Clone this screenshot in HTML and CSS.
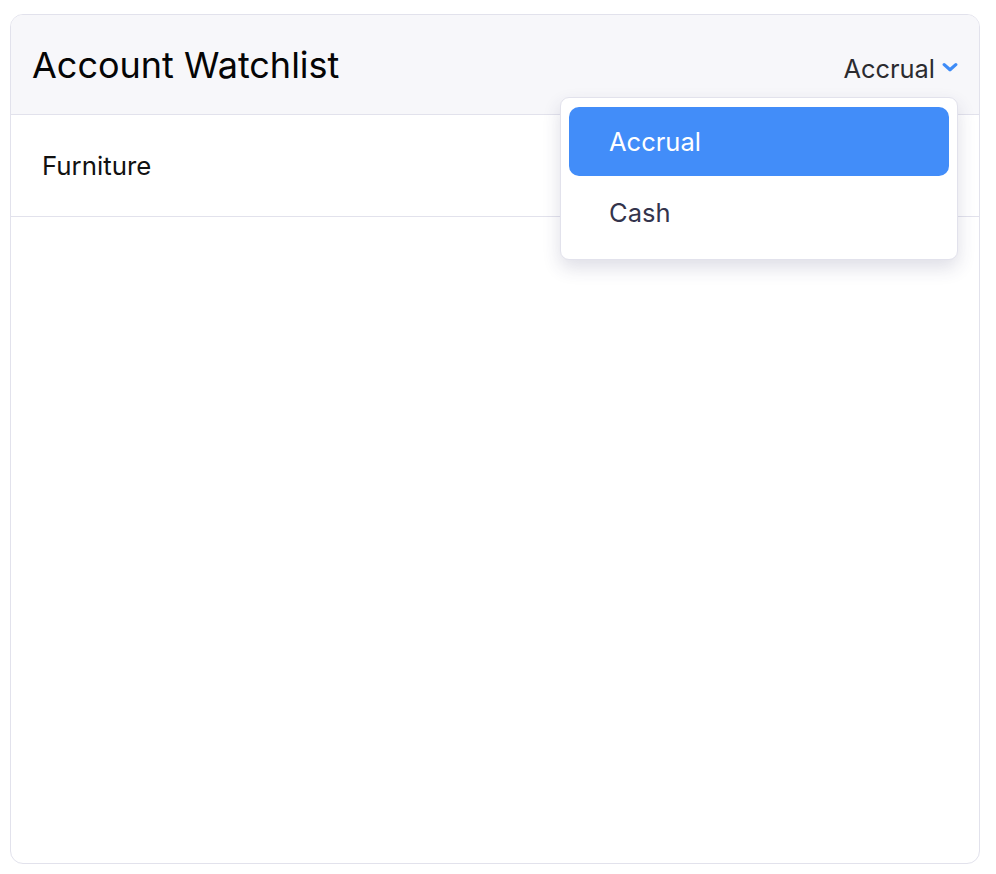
FILE: index.html
```html
<!DOCTYPE html>
<html lang="en">
<head>
<meta charset="utf-8">
<title>Account Watchlist</title>
<link rel="stylesheet" href="styles.css">
</head>
<body>
<div class="card">
  <div class="card-header">
    <h1 class="title">Account Watchlist</h1>
    <div class="basis">
      <button class="basis-toggle" type="button">
        <span>Accrual</span>
        <svg class="chev" width="16" height="11" viewBox="0 0 16 11" aria-hidden="true"><path d="M2.2 2.6 L8 7.8 L13.8 2.6" fill="none" stroke="#3d8bf7" stroke-width="3.2" stroke-linecap="round" stroke-linejoin="round"/></svg>
      </button>
      <ul class="menu">
        <li class="menu-item active">Accrual</li>
        <li class="menu-item">Cash</li>
      </ul>
    </div>
  </div>
  <div class="row">Furniture</div>
</div>
</body>
</html>
```
FILE: styles.css
```css
* { box-sizing: border-box; }
html, body { margin: 0; padding: 0; background: #fff; }
body {
  padding: 14px 16px 10px 10px;
  font-family: Inter, "Noto Sans", sans-serif;
  color: #000;
}
.card {
  height: 850px;
  border: 1px solid #e2e2ec;
  border-radius: 13px;
  background: #fff;
}
.card-header {
  height: 100px;
  background: #f7f7fa;
  border-bottom: 1px solid #e2e2ec;
  border-radius: 12px 12px 0 0;
  display: flex;
  align-items: center;
  justify-content: space-between;
  padding: 0 21px 0 21px;
}
.title {
  margin: 0;
  font-size: 36px;
  font-weight: 400;
  color: #050505;
}
.basis {
  position: relative;
  align-self: stretch;
  display: flex;
  align-items: center;
}
.basis-toggle {
  border: 0;
  background: none;
  padding: 0;
  margin-top: 7px;
  display: flex;
  align-items: center;
  gap: 7px;
  font: inherit;
  font-size: 25.4px;
  color: #2b2b2f;
  cursor: pointer;
}
.chev { display: block; margin-top: -2px; }
.menu {
  position: absolute;
  top: 82px;
  right: 0;
  width: 398px;
  margin: 0;
  padding: 9px 8px 10px;
  list-style: none;
  background: #fff;
  border: 1px solid #e2e2ec;
  border-radius: 9px;
  box-shadow: 0 8px 18px rgba(50, 50, 100, 0.16);
  z-index: 5;
}
.menu-item {
  height: 73px;
  display: flex;
  align-items: center;
  padding-left: 40px;
  font-size: 25.5px;
  color: #33344c;
  border-radius: 10px;
}
.menu-item.active {
  background: #428df9;
  color: #fff;
  height: 69px;
}
.row {
  height: 102px;
  border-bottom: 1px solid #e2e2ec;
  display: flex;
  align-items: center;
  padding-left: 31px;
  font-size: 25.8px;
  color: #111;
}
```
